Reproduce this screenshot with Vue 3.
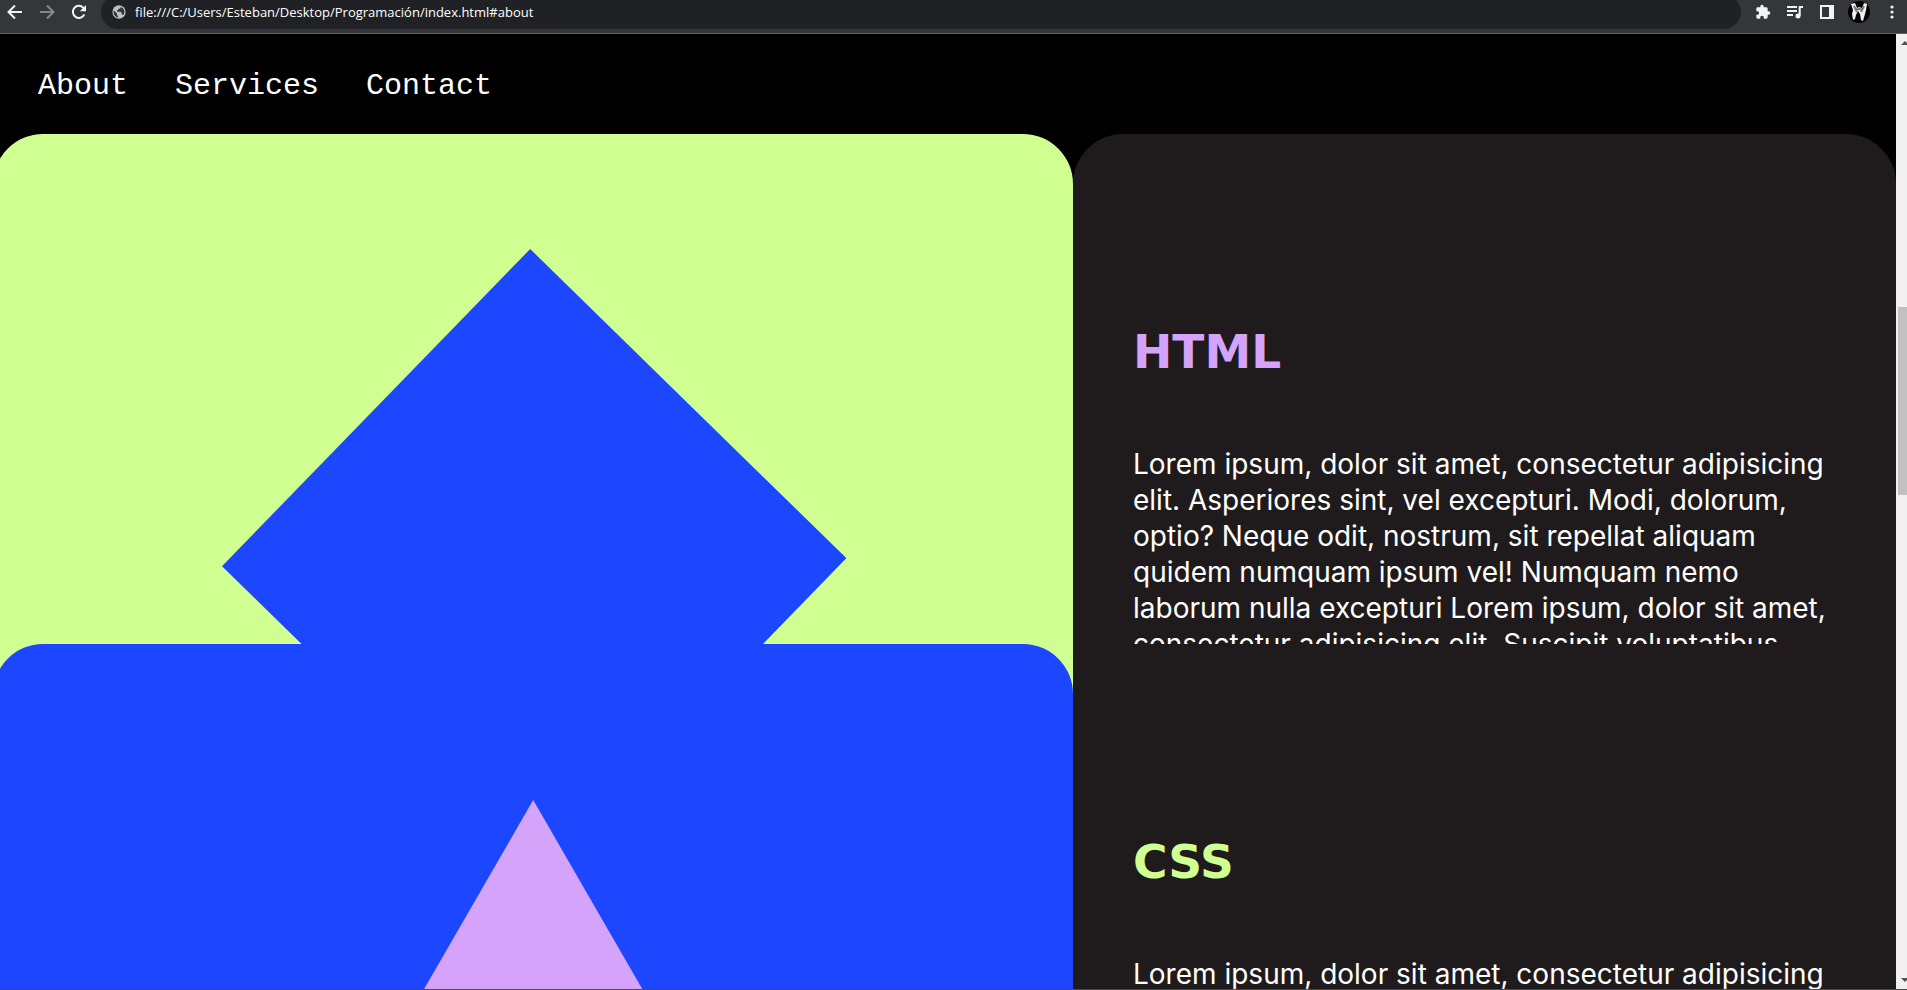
<script setup>
import { ref } from "vue";

const url = ref("file:///C:/Users/Esteban/Desktop/Programación/index.html#about");

const links = ["About", "Services", "Contact"];

const sections = [
  { title: "HTML", theme: "lime", shape: "diamond" },
  { title: "CSS", theme: "blue", shape: "triangle" },
];
</script>

<template>
  <div class="window">
    <header class="toolbar">
      <button class="tool" aria-label="Back">
        <svg viewBox="0 0 16 16"><path d="M15 8H2M8 1.5 1.5 8 8 14.5" /></svg>
      </button>
      <button class="tool dim" aria-label="Forward">
        <svg viewBox="0 0 16 16"><path d="M1 8h13M8 1.5 14.5 8 8 14.5" /></svg>
      </button>
      <button class="tool" aria-label="Reload">
        <svg viewBox="0 0 16 16">
          <path d="M13.3 10.5A6 6 0 1 1 12.4 3.9L14 5.5" />
          <path class="fill" d="M15 1v6.2H8.8z" />
        </svg>
      </button>
      <div class="address">
        <svg class="globe" viewBox="0 0 16 16">
          <circle cx="8" cy="8" r="7.6" fill="#bdc1c6" />
          <path
            d="M2 6.2 5.6 9.7v1.6L7 12.6v1.8A6.5 6.5 0 0 1 2 6.2zM10 2v.8a1.4 1.4 0 0 1-1.4 1.4H7.2v1.4L5.8 6.3v1.4h4.3l.8.8v2.1h.8l1.1 1A6.3 6.3 0 0 0 10 2z"
            fill="#303134"
          />
        </svg>
        <input v-model="url" type="text" aria-label="Address" spellcheck="false" />
      </div>
      <div class="actions">
        <button class="tool" aria-label="Extensions">
          <svg viewBox="0 0 24 24">
            <path
              class="fill"
              d="M20.5 11H19V7c0-1.1-.9-2-2-2h-4V3.5a2.5 2.5 0 0 0-5 0V5H4c-1.100 0-2 .9-2 2v3.800h1.500a2.700 2.700 0 0 1 0 5.400H2V20c0 1.100.9 2 2 2h3.800v-1.500a2.700 2.700 0 0 1 5.400 0V22H17c1.100 0 2-.9 2-2v-4h1.500a2.500 2.500 0 0 0 0-5z"
            />
          </svg>
        </button>
        <button class="tool" aria-label="Media">
          <svg viewBox="0 0 16 16">
            <path d="M0 3h10M0 7h10M0 11h6M12.7 12V3H16" />
            <circle class="fill" cx="11" cy="12" r="2.5" />
          </svg>
        </button>
        <button class="tool" aria-label="Side panel">
          <svg viewBox="0 0 16 16">
            <path class="fill" fill-rule="evenodd" d="M1 1h14v14H1zM3 3v10h7V3z" />
          </svg>
        </button>
        <button class="tool avatar" aria-label="Profile">
          <svg viewBox="0 0 22 22">
            <circle cx="11" cy="11" r="11" fill="#000" />
            <path
              d="M3 3l4-1 2 5 2-1 3 1 2-5 3 1-1 6-1 4-2 7-2-1-1-6-2-3-2 4-1 4-2 1-1-6 1-4z"
              fill="#f1f1f1"
            />
            <path d="M6 5l3 6M16 5l-3 6M8 9q3-2 6 0" fill="none" stroke="#777" />
          </svg>
        </button>
        <button class="tool menu" aria-label="Menu">
          <svg viewBox="0 0 16 16">
            <circle class="fill" cx="8" cy="3" r="1.6" />
            <circle class="fill" cx="8" cy="8" r="1.6" />
            <circle class="fill" cx="8" cy="13" r="1.6" />
          </svg>
        </button>
      </div>
    </header>

    <div class="view">
      <div class="page">
        <nav class="nav">
          <a v-for="link in links" :key="link" :href="'#' + link.toLowerCase()">{{ link }}</a>
        </nav>

        <main>
          <section v-for="item in sections" :key="item.title" class="panel">
            <div class="card art" :class="item.theme">
              <svg v-if="item.shape === 'diamond'" viewBox="0 0 626 626">
                <polygon points="310,0 626,309 318,626 2,317" fill="#1c47ff" />
              </svg>
              <svg v-else viewBox="0 0 628 546">
                <polygon points="314,0 628,544 0,544" fill="#d5a3fa" />
              </svg>
            </div>
            <div class="card info" :class="item.theme">
              <h2>{{ item.title }}</h2>
              <p>
                Lorem ipsum, dolor sit amet, consectetur adipisicing elit.
                Asperiores sint, vel excepturi. Modi, dolorum, optio? Neque
                odit, nostrum, sit repellat aliquam quidem numquam ipsum vel!
                Numquam nemo laborum nulla excepturi Lorem ipsum, dolor sit
                amet, consectetur adipisicing elit. Suscipit voluptatibus
              </p>
            </div>
          </section>
        </main>
      </div>

      <div class="scrollbar">
        <svg viewBox="0 0 11 17"><path d="M5 11l4-4 4 4z" /></svg>
        <div class="thumb"></div>
        <svg viewBox="0 0 11 17"><path d="M5 6l4 4 4-4z" /></svg>
      </div>
    </div>
  </div>
</template>

<style>
body {
  margin: 0;
  background: #000;
}
</style>

<style scoped>
* {
  box-sizing: border-box;
}

.window {
  display: flex;
  flex-direction: column;
  height: 100vh;
  overflow: hidden;
  border-bottom: 1px solid #4a4a55;
}

.toolbar {
  display: flex;
  flex: none;
  align-items: center;
  height: 34px;
  padding: 0 7px 10px;
  background: #35363a;
  border-bottom: 1px solid #5f6165;
}

.tool {
  width: 16px;
  height: 16px;
  margin-right: 16px;
  padding: 0;
  background: none;
  border: 0;
}

.tool svg {
  display: block;
  width: 100%;
  height: 100%;
  fill: none;
  stroke: #f1f3f4;
  stroke-width: 2;
}

.tool .fill {
  fill: #f1f3f4;
  stroke: none;
}

.tool.dim svg {
  stroke: #86888a;
}

.address {
  display: flex;
  flex: 1;
  align-items: center;
  gap: 9px;
  height: 34px;
  margin-left: -2px;
  padding: 0 24px 0 11px;
  border-radius: 17px;
  background: #202124;
}

.address input {
  flex: 1;
  padding: 0;
  border: 0;
  outline: none;
  background: none;
  color: #fff;
  font: 13px "Open Sans", "Noto Sans", sans-serif;
}

.globe {
  width: 14px;
  height: 14px;
}

.actions {
  display: flex;
  align-items: center;
  gap: 16px;
  margin-left: 14px;
}

.actions .tool {
  margin: 0;
}

.actions .avatar {
  width: 22px;
  height: 22px;
  margin-left: -3px;
}

.actions .avatar svg {
  stroke: none;
}

.actions .menu {
  margin-left: -2px;
}

.view {
  display: flex;
  flex: 1;
  min-height: 0;
}

.page {
  flex: 1;
  overflow: hidden;
  background: #000;
}

.nav {
  display: flex;
  align-items: center;
  gap: 47px;
  height: 100px;
  padding: 4px 38px 0;
}

.nav a {
  color: #fff;
  font-family: "Liberation Mono", monospace;
  font-size: 30px;
  text-decoration: none;
}

main {
  margin-left: -7px;
}

.panel {
  position: relative;
  display: grid;
  grid-template-columns: 1080fr 823fr;
  height: 510px;
}

.card {
  height: calc(100vh - 134px);
  border-radius: 50px 50px 0 0;
}

.art {
  display: flex;
  align-items: center;
  justify-content: center;
}

.art svg {
  width: 58%;
}

.art.lime {
  background: #d0ff92;
}

.art.blue {
  background: #1c47ff;
}

.info {
  padding: 190px 60px 0;
  background: #1f1b1c;
}

h2 {
  margin: 0 0 66px;
  font: bold 47px/56px "DejaVu Sans", sans-serif;
}

.info.lime h2 {
  color: #d5a3fa;
}

.info.blue h2 {
  color: #d0ff92;
}

p {
  margin: 0;
  color: #fff;
  font: 28px/36px Inter, sans-serif;
}

.scrollbar {
  display: flex;
  flex-direction: column;
  width: 11px;
  background: #f1f1f1;
}

.scrollbar svg {
  width: 11px;
  height: 17px;
  fill: #505050;
}

.scrollbar svg:last-child {
  margin-top: auto;
}

.thumb {
  height: 188px;
  margin: 256px 0 0 2px;
  background: #c1c1c1;
}
</style>
